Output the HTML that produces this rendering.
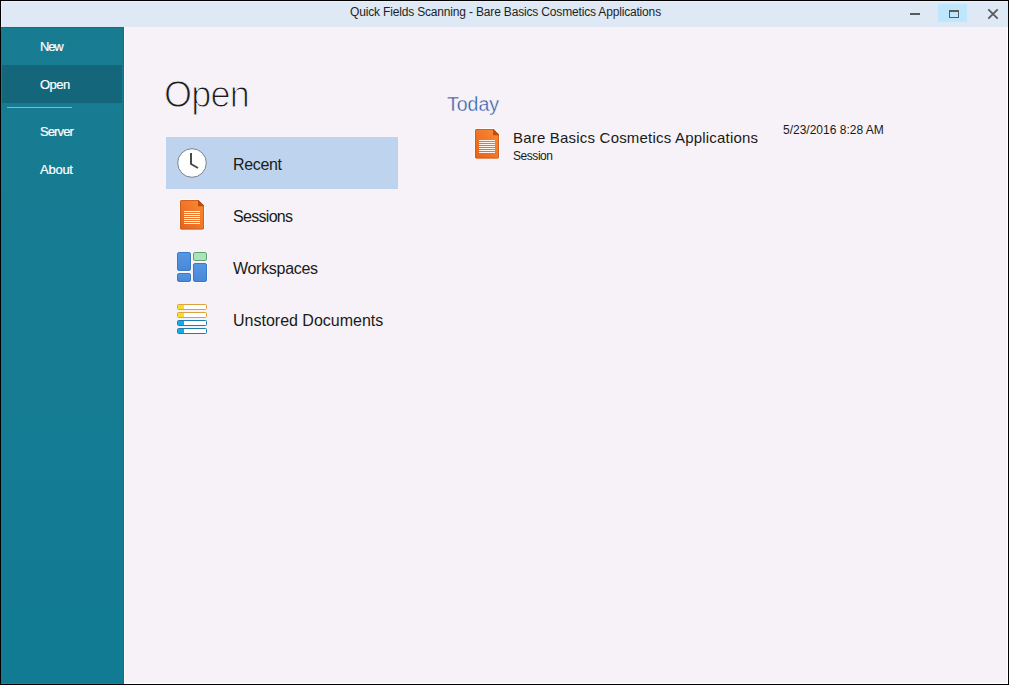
<!DOCTYPE html>
<html><head><meta charset="utf-8">
<style>
html,body{margin:0;padding:0;width:1009px;height:685px;overflow:hidden;background:#000;}
body{font-family:"Liberation Sans",sans-serif;position:relative;}
.abs{position:absolute;}
#win{position:absolute;left:0;top:0;width:1009px;height:685px;background:#000;}
#title{position:absolute;left:1px;top:1px;width:1007px;height:26px;background:#DEE9F5;}
#titleHi{position:absolute;left:1px;top:1px;width:1007px;height:1px;background:#E7F3FC;}
#titleHiL{position:absolute;left:1px;top:1px;width:1px;height:26px;background:#E7F3FC;}
#ttext{position:absolute;left:1px;top:5px;width:1009px;text-align:center;font-size:12px;letter-spacing:-0.17px;color:#1e1e1e;white-space:nowrap;}
#nav{position:absolute;left:1px;top:27px;width:123px;height:657px;background:linear-gradient(#187C91,#117B94);}
#navTop{position:absolute;left:1px;top:27px;width:123px;height:1px;background:#0F6E85;}
#navR{position:absolute;left:123px;top:27px;width:1px;height:657px;background:#0F7288;}
#content{position:absolute;left:124px;top:27px;width:884px;height:657px;background:#F6F2F7;}
#contentL{position:absolute;left:124px;top:27px;width:1px;height:657px;background:#FDF9FD;}
#rightHi{position:absolute;left:1007px;top:27px;width:1px;height:657px;background:#FFFFFF;}
#botHi{position:absolute;left:124px;top:683px;width:884px;height:1px;background:#FFFFFF;}
#navBot{position:absolute;left:1px;top:683px;width:122px;height:1px;background:#1386A0;}
.nav{position:absolute;left:40px;font-size:13px;color:#fff;white-space:nowrap;-webkit-text-stroke:0.2px #fff;}
#navSel{position:absolute;left:2px;top:65px;width:120px;height:38px;background:#14667B;}
#sep{position:absolute;left:7px;top:107px;width:65px;height:1px;background:#AEA9A8;}
#hOpen{position:absolute;left:164px;top:73.5px;font-size:36px;letter-spacing:-0.8px;color:#1c1c1c;-webkit-text-stroke:1.1px #F6F2F7;white-space:nowrap;}
#hl{position:absolute;left:166px;top:137px;width:232px;height:52px;background:#BDD3EE;}
.item{position:absolute;left:233px;font-size:16px;color:#1a1a1a;white-space:nowrap;}
#today{position:absolute;left:447px;top:93px;font-size:19.5px;color:#2C5AA8;-webkit-text-stroke:0.35px #F6F2F7;white-space:nowrap;}
#fname{position:absolute;left:513px;top:129px;font-size:15px;letter-spacing:0.2px;color:#1a1a1a;white-space:nowrap;}
#ftype{position:absolute;left:513px;top:149px;font-size:12px;letter-spacing:-0.45px;color:#1a1a1a;white-space:nowrap;}
#fdate{position:absolute;left:783px;top:123px;font-size:12px;color:#1a1a1a;white-space:nowrap;}
</style></head><body>
<div id="win"></div>
<div id="title"></div>
<div id="titleHi"></div>
<div id="titleHiL"></div>
<div id="ttext">Quick Fields Scanning - Bare Basics Cosmetics Applications</div>
<!-- window buttons -->
<div class="abs" style="left:910px;top:13px;width:10px;height:2px;background:#5a5a5a;"></div>
<div class="abs" style="left:938px;top:4px;width:29px;height:18px;background:#BEE6FD;"></div>
<div class="abs" style="left:949px;top:10px;width:8px;height:5px;border:1px solid #5c5c5c;border-top:2px solid #5c5c5c;"></div>
<svg class="abs" style="left:986px;top:7px;" width="14" height="14" viewBox="0 0 14 14"><path d="M2.3 2.3 L11.7 11.7 M11.7 2.3 L2.3 11.7" stroke="#5a5a5a" stroke-width="1.8"/></svg>

<div id="nav"></div>
<div id="navTop"></div>
<div id="navR"></div>
<div id="content"></div>
<div id="contentL"></div>
<div id="rightHi"></div>
<div id="botHi"></div>
<div id="navBot"></div>

<div id="navSel"></div>
<div class="nav" style="top:39px;letter-spacing:-1.2px;left:40px;">New</div>
<div class="nav" style="top:77px;letter-spacing:-0.5px;">Open</div>
<div id="sep"></div>
<div class="nav" style="top:124px;letter-spacing:-0.9px;">Server</div>
<div class="nav" style="top:162px;letter-spacing:-0.25px;">About</div>

<div id="hOpen">Open</div>
<div id="hl"></div>
<div class="item" style="top:156px;letter-spacing:-0.35px;">Recent</div>
<div class="item" style="top:208px;letter-spacing:-0.7px;">Sessions</div>
<div class="item" style="top:260px;letter-spacing:-0.3px;">Workspaces</div>
<div class="item" style="top:312px;">Unstored Documents</div>

<svg class="abs" style="left:176px;top:147px;" width="32" height="32" viewBox="0 0 32 32"><circle cx="16" cy="16" r="14.3" fill="#fff" stroke="#7d838c" stroke-width="1"/><path d="M15 6 V17 L22 21" fill="none" stroke="#4a4a4a" stroke-width="2"/></svg><svg class="abs" style="left:179px;top:199px;" width="26" height="32" viewBox="-1 -1 26 32"><defs><linearGradient id="ga" x1="1" y1="0" x2="0" y2="1"><stop offset="0" stop-color="#FB8B34"/><stop offset="1" stop-color="#E5621C"/></linearGradient></defs><path d="M1.5 -0.5 H18.8 L24.5 5.2 V28 A1.5 1.5 0 0 1 23 29.5 H1.5 A1.5 1.5 0 0 1 0 28 V1 A1.5 1.5 0 0 1 1.5 -0.5 Z" fill="none" stroke="#fff" stroke-width="1.2" opacity="0.9"/><path d="M1.5 0 H18.5 L24 5.5 V28 A1.5 1.5 0 0 1 22.5 29.5 H1.5 A1.5 1.5 0 0 1 0 28 V1.5 A1.5 1.5 0 0 1 1.5 0 Z" fill="url(#ga)"/><path d="M1.5 0.5 H18.3 L23.5 5.7 V28 A1 1 0 0 1 22.5 29 H1.5 A1 1 0 0 1 0.5 28 V1.5 A1 1 0 0 1 1.5 0.5 Z" fill="none" stroke="#C95A1C" stroke-width="1" opacity="0.8"/><path d="M18 0 H18.5 L24 5.5 V6.2 H18 Z" fill="#BA4D15"/><rect x="4" y="11" width="16" height="1" fill="#FFF3EA"/><rect x="4" y="13" width="16" height="1" fill="#FFF3EA"/><rect x="4" y="15" width="16" height="1" fill="#FFF3EA"/><rect x="4" y="17" width="16" height="1" fill="#FFF3EA"/><rect x="4" y="19" width="16" height="1" fill="#FFF3EA"/><rect x="4" y="21" width="16" height="1" fill="#FFF3EA"/><rect x="4" y="23" width="16" height="1" fill="#FFF3EA"/></svg><svg class="abs" style="left:176px;top:251px;" width="32" height="32" viewBox="0 0 32 32"><defs><linearGradient id="bl" x1="0" y1="0" x2="0" y2="1"><stop offset="0" stop-color="#5596E6"/><stop offset="1" stop-color="#4A88D6"/></linearGradient></defs>
<rect x="1" y="1" width="15" height="20" rx="2" fill="#fff" opacity=".6"/><rect x="17" y="1" width="15" height="10" rx="2" fill="#fff" opacity=".6"/><rect x="1" y="22" width="15" height="10" rx="2" fill="#fff" opacity=".6"/><rect x="17" y="12" width="15" height="20" rx="2" fill="#fff" opacity=".6"/>
<rect x="1.5" y="1.5" width="13" height="18" rx="1.5" fill="url(#bl)" stroke="#3C79C6" stroke-width="1"/>
<rect x="1.5" y="22.5" width="13" height="8" rx="1.5" fill="url(#bl)" stroke="#3C79C6" stroke-width="1"/>
<rect x="17.5" y="1.5" width="13" height="8" rx="1.5" fill="#ABE3BD" stroke="#5EA56C" stroke-width="1"/>
<rect x="17.5" y="12.5" width="13" height="18" rx="1.5" fill="url(#bl)" stroke="#3C79C6" stroke-width="1"/>
</svg><svg class="abs" style="left:176px;top:303px;" width="32" height="32" viewBox="0 0 32 32"><rect x="1.5" y="1.5" width="29" height="5" rx="1" fill="#fff" stroke="#DCA23E" stroke-width="1"/><rect x="2" y="2" width="6" height="4" fill="#F6E01E"/><rect x="1.5" y="9.5" width="29" height="5" rx="1" fill="#fff" stroke="#DCA23E" stroke-width="1"/><rect x="2" y="10" width="6" height="4" fill="#F6E01E"/><rect x="1.5" y="17.5" width="29" height="5" rx="1" fill="#fff" stroke="#1C7DAE" stroke-width="1"/><rect x="2" y="18" width="6" height="4" fill="#13AAEE"/><rect x="1.5" y="25.5" width="29" height="5" rx="1" fill="#fff" stroke="#1C7DAE" stroke-width="1"/><rect x="2" y="26" width="6" height="4" fill="#13AAEE"/></svg><svg class="abs" style="left:474px;top:128px;" width="26" height="32" viewBox="-1 -1 26 32"><defs><linearGradient id="gb" x1="1" y1="0" x2="0" y2="1"><stop offset="0" stop-color="#FB8B34"/><stop offset="1" stop-color="#E5621C"/></linearGradient></defs><path d="M1.5 -0.5 H18.8 L24.5 5.2 V28 A1.5 1.5 0 0 1 23 29.5 H1.5 A1.5 1.5 0 0 1 0 28 V1 A1.5 1.5 0 0 1 1.5 -0.5 Z" fill="none" stroke="#fff" stroke-width="1.2" opacity="0.9"/><path d="M1.5 0 H18.5 L24 5.5 V28 A1.5 1.5 0 0 1 22.5 29.5 H1.5 A1.5 1.5 0 0 1 0 28 V1.5 A1.5 1.5 0 0 1 1.5 0 Z" fill="url(#gb)"/><path d="M1.5 0.5 H18.3 L23.5 5.7 V28 A1 1 0 0 1 22.5 29 H1.5 A1 1 0 0 1 0.5 28 V1.5 A1 1 0 0 1 1.5 0.5 Z" fill="none" stroke="#C95A1C" stroke-width="1" opacity="0.8"/><path d="M18 0 H18.5 L24 5.5 V6.2 H18 Z" fill="#BA4D15"/><rect x="4" y="11" width="16" height="1" fill="#FFF3EA"/><rect x="4" y="13" width="16" height="1" fill="#FFF3EA"/><rect x="4" y="15" width="16" height="1" fill="#FFF3EA"/><rect x="4" y="17" width="16" height="1" fill="#FFF3EA"/><rect x="4" y="19" width="16" height="1" fill="#FFF3EA"/><rect x="4" y="21" width="16" height="1" fill="#FFF3EA"/><rect x="4" y="23" width="16" height="1" fill="#FFF3EA"/></svg>
<div id="today">Today</div>
<div id="fname">Bare Basics Cosmetics Applications</div>
<div id="ftype">Session</div>
<div id="fdate">5/23/2016 8:28 AM</div>
</body></html>
